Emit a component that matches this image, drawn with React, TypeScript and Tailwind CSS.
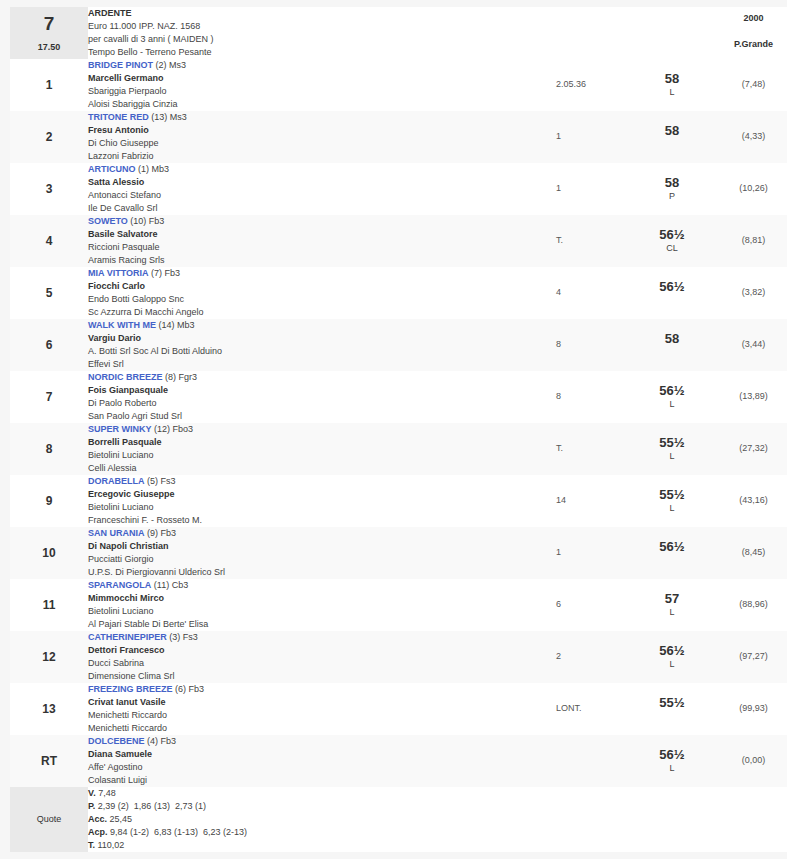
import React from "react";

type Runner = {
  pos: string;
  horse: string;
  info: string;
  jockey: string;
  trainer: string;
  owner: string;
  time: string;
  weight: string;
  note: string;
  odds: string;
};

const runners: Runner[] = [
  { pos: "1", horse: "BRIDGE PINOT", info: "(2) Ms3", jockey: "Marcelli Germano", trainer: "Sbariggia Pierpaolo", owner: "Aloisi Sbariggia Cinzia", time: "2.05.36", weight: "58", note: "L", odds: "(7,48)" },
  { pos: "2", horse: "TRITONE RED", info: "(13) Ms3", jockey: "Fresu Antonio", trainer: "Di Chio Giuseppe", owner: "Lazzoni Fabrizio", time: "1", weight: "58", note: "", odds: "(4,33)" },
  { pos: "3", horse: "ARTICUNO", info: "(1) Mb3", jockey: "Satta Alessio", trainer: "Antonacci Stefano", owner: "Ile De Cavallo Srl", time: "1", weight: "58", note: "P", odds: "(10,26)" },
  { pos: "4", horse: "SOWETO", info: "(10) Fb3", jockey: "Basile Salvatore", trainer: "Riccioni Pasquale", owner: "Aramis Racing Srls", time: "T.", weight: "56½", note: "CL", odds: "(8,81)" },
  { pos: "5", horse: "MIA VITTORIA", info: "(7) Fb3", jockey: "Fiocchi Carlo", trainer: "Endo Botti Galoppo Snc", owner: "Sc Azzurra Di Macchi Angelo", time: "4", weight: "56½", note: "", odds: "(3,82)" },
  { pos: "6", horse: "WALK WITH ME", info: "(14) Mb3", jockey: "Vargiu Dario", trainer: "A. Botti Srl Soc Al Di Botti Alduino", owner: "Effevi Srl", time: "8", weight: "58", note: "", odds: "(3,44)" },
  { pos: "7", horse: "NORDIC BREEZE", info: "(8) Fgr3", jockey: "Fois Gianpasquale", trainer: "Di Paolo Roberto", owner: "San Paolo Agri Stud Srl", time: "8", weight: "56½", note: "L", odds: "(13,89)" },
  { pos: "8", horse: "SUPER WINKY", info: "(12) Fbo3", jockey: "Borrelli Pasquale", trainer: "Bietolini Luciano", owner: "Celli Alessia", time: "T.", weight: "55½", note: "L", odds: "(27,32)" },
  { pos: "9", horse: "DORABELLA", info: "(5) Fs3", jockey: "Ercegovic Giuseppe", trainer: "Bietolini Luciano", owner: "Franceschini F. - Rosseto M.", time: "14", weight: "55½", note: "L", odds: "(43,16)" },
  { pos: "10", horse: "SAN URANIA", info: "(9) Fb3", jockey: "Di Napoli Christian", trainer: "Pucciatti Giorgio", owner: "U.P.S. Di Piergiovanni Ulderico Srl", time: "1", weight: "56½", note: "", odds: "(8,45)" },
  { pos: "11", horse: "SPARANGOLA", info: "(11) Cb3", jockey: "Mimmocchi Mirco", trainer: "Bietolini Luciano", owner: "Al Pajari Stable Di Berte' Elisa", time: "6", weight: "57", note: "L", odds: "(88,96)" },
  { pos: "12", horse: "CATHERINEPIPER", info: "(3) Fs3", jockey: "Dettori Francesco", trainer: "Ducci Sabrina", owner: "Dimensione Clima Srl", time: "2", weight: "56½", note: "L", odds: "(97,27)" },
  { pos: "13", horse: "FREEZING BREEZE", info: "(6) Fb3", jockey: "Crivat Ianut Vasile", trainer: "Menichetti Riccardo", owner: "Menichetti Riccardo", time: "LONT.", weight: "55½", note: "", odds: "(99,93)" },
  { pos: "RT", horse: "DOLCEBENE", info: "(4) Fb3", jockey: "Diana Samuele", trainer: "Affe' Agostino", owner: "Colasanti Luigi", time: "", weight: "56½", note: "L", odds: "(0,00)" },
];

const cols = "grid grid-cols-[78px_464px_72px_96px_1fr]";

const RunnerRow: React.FC<{ r: Runner; alt: boolean }> = ({ r, alt }) => (
  <div className={`${cols} h-[52px] ${alt ? "bg-[#f9f9f9]" : "bg-white"}`}>
    <div className="flex items-center justify-center text-[12px] font-bold text-[#333]">{r.pos}</div>
    <div className="flex flex-col text-[9px] leading-[13px] text-[#444]">
      <div>
        <span className="font-bold text-[#4462c8]">{r.horse}</span> {r.info}
      </div>
      <div className="font-bold text-[#333]">{r.jockey}</div>
      <div>{r.trainer}</div>
      <div>{r.owner}</div>
    </div>
    <div className="flex items-center pl-1 text-[9px] text-[#555]">{r.time}</div>
    <div className="flex flex-col items-center justify-center">
      <div className="text-[13px] leading-[15px] font-bold text-[#333]">{r.weight}</div>
      <div className="text-[9px] leading-[13px] text-[#444]">{r.note || "\u00a0"}</div>
    </div>
    <div className="flex items-center justify-center text-[9px] text-[#555]">{r.odds}</div>
  </div>
);

export default function App() {
  return (
    <div className="min-h-[859px] bg-[#f6f6f6] pt-[7px] pl-[10px] font-['Liberation_Sans',Arial,sans-serif]">
      <div className={`${cols} h-[52px] bg-white`}>
        <div className="flex flex-col items-center justify-center gap-[9px] bg-[#e9e9e9] text-[#333] font-bold">
          <div className="text-[19px] leading-[19px]">7</div>
          <div className="text-[9px] leading-[11px]">17.50</div>
        </div>
        <div className="flex flex-col text-[9px] leading-[13px] text-[#444]">
          <div className="font-bold text-[#333]">ARDENTE</div>
          <div>Euro 11.000 IPP. NAZ. 1568</div>
          <div>per cavalli di 3 anni ( MAIDEN )</div>
          <div>Tempo Bello - Terreno Pesante</div>
        </div>
        <div />
        <div />
        <div className="flex flex-col items-center pt-[6px] gap-[15px] text-[9px] leading-[11px] font-bold text-[#333]">
          <div>2000</div>
          <div>P.Grande</div>
        </div>
      </div>
      {runners.map((r, i) => (
        <RunnerRow key={r.pos} r={r} alt={i % 2 === 1} />
      ))}
      <div className={`${cols} h-[65px] bg-white`}>
        <div className="flex items-center justify-center bg-[#e9e9e9] text-[9px] text-[#333]">Quote</div>
        <div className="col-span-4 flex flex-col whitespace-pre text-[9px] leading-[13px] text-[#444]">
          <div><b className="text-[#333]">V.</b> 7,48</div>
          <div><b className="text-[#333]">P.</b> 2,39 (2)  1,86 (13)  2,73 (1)</div>
          <div><b className="text-[#333]">Acc.</b> 25,45</div>
          <div><b className="text-[#333]">Acp.</b> 9,84 (1-2)  6,83 (1-13)  6,23 (2-13)</div>
          <div><b className="text-[#333]">T.</b> 110,02</div>
        </div>
      </div>
    </div>
  );
}
